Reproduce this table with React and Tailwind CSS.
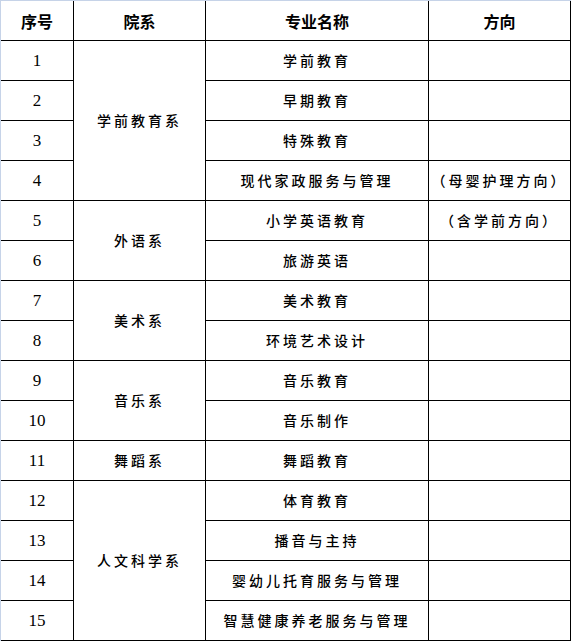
const rows = [
  { no: 1, dept: "学前教育系", span: 4, major: "学前教育", dir: "" },
  { no: 2, major: "早期教育", dir: "" },
  { no: 3, major: "特殊教育", dir: "" },
  { no: 4, major: "现代家政服务与管理", dir: "（母婴护理方向）" },
  { no: 5, dept: "外语系", span: 2, major: "小学英语教育", dir: "（含学前方向）" },
  { no: 6, major: "旅游英语", dir: "" },
  { no: 7, dept: "美术系", span: 2, major: "美术教育", dir: "" },
  { no: 8, major: "环境艺术设计", dir: "" },
  { no: 9, dept: "音乐系", span: 2, major: "音乐教育", dir: "" },
  { no: 10, major: "音乐制作", dir: "" },
  { no: 11, dept: "舞蹈系", span: 1, major: "舞蹈教育", dir: "" },
  { no: 12, dept: "人文科学系", span: 4, major: "体育教育", dir: "" },
  { no: 13, major: "播音与主持", dir: "" },
  { no: 14, major: "婴幼儿托育服务与管理", dir: "" },
  { no: 15, major: "智慧健康养老服务与管理", dir: "" },
]

const spanClass = {
  1: "row-span-1",
  2: "row-span-2",
  4: "row-span-4",
}

const cell = "flex items-center justify-center border-r border-b border-black text-black"
const head = "text-[16px] font-bold font-['Noto_Sans_CJK_SC',sans-serif]"
const body = "text-[14px] font-medium tracking-[3px] font-['Noto_Sans_CJK_SC',sans-serif]"
const num = "text-[17px] font-['Liberation_Serif',serif]"

const App = () => {
  return (
    <div className="w-[571px] h-[641px] bg-white border-t border-l border-[#c6d3e8]">
      <div className="grid grid-cols-[73px_132px_223px_142px] grid-rows-[repeat(16,40px)]">
        {/* header row */}
        <div className={`${cell} ${head}`}>序号</div>
        <div className={`${cell} ${head}`}>院系</div>
        <div className={`${cell} ${head}`}>专业名称</div>
        <div className={`${cell} ${head}`}>方向</div>

        {rows.map((r) => [
          <div key={`n${r.no}`} className={`${cell} ${num}`}>
            {r.no}
          </div>,
          r.dept ? (
            <div key={`d${r.no}`} className={`${cell} ${body} ${spanClass[r.span]}`}>
              {r.dept}
            </div>
          ) : null,
          <div key={`m${r.no}`} className={`${cell} ${body}`}>
            {r.major}
          </div>,
          <div key={`f${r.no}`} className={`${cell} ${body}`}>
            {r.dir}
          </div>,
        ])}
      </div>
    </div>
  )
}

export default App
